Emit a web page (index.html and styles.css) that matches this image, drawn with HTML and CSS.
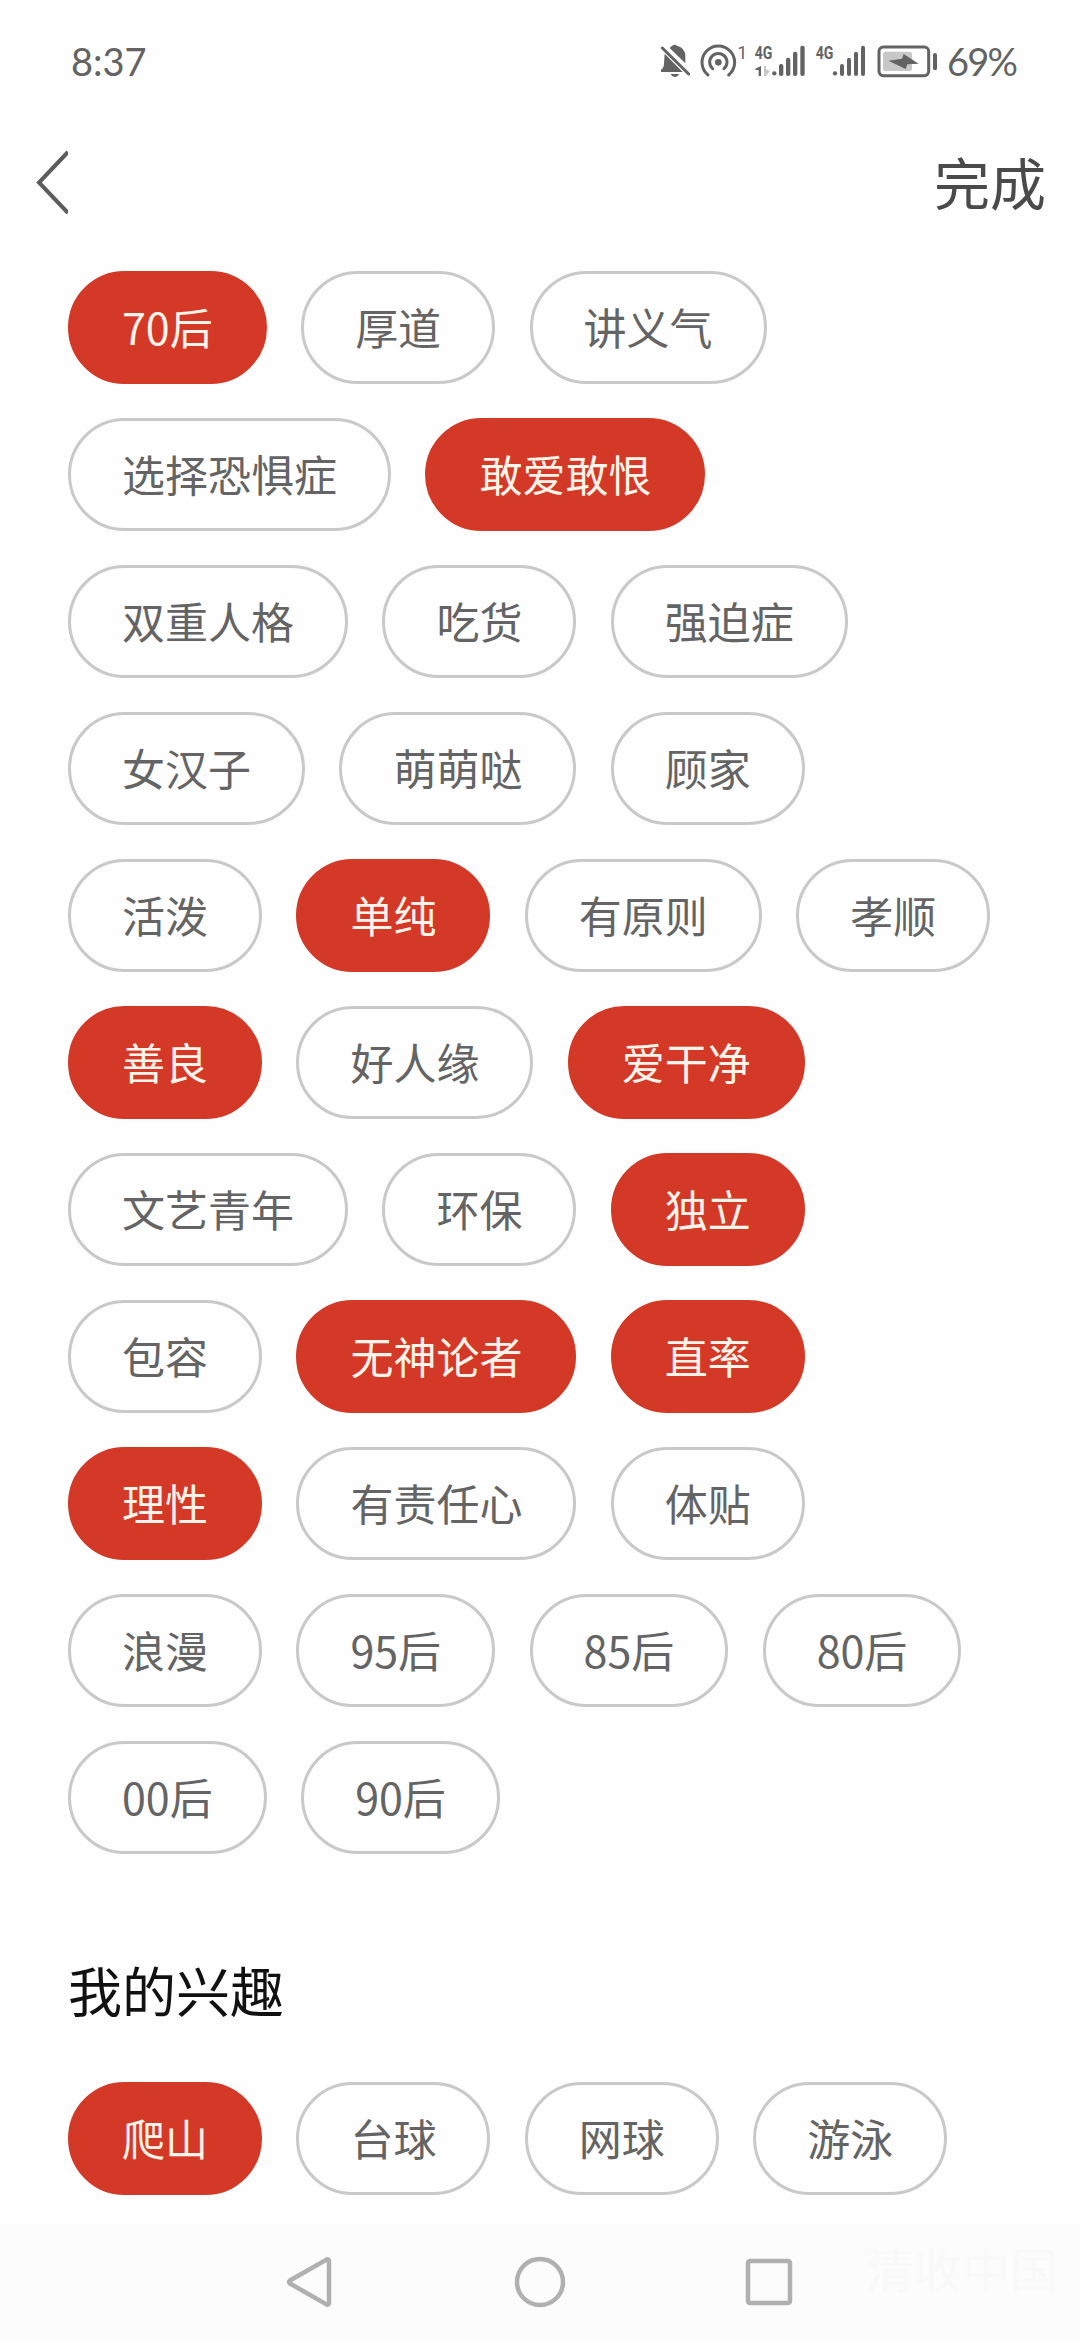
FILE: index.html
```html
<!DOCTYPE html>
<html lang="zh-CN">
<head>
    <meta charset="UTF-8">
    <meta name="viewport" content="width=device-width, initial-scale=1.0">
    <title>我的标签</title>
    <link rel="stylesheet" href="styles.css">
</head>
<body>
    <div class="status-bar">
        <span class="time">8:37</span>
        <div class="status-icons">
            <svg class="icon-bell" viewBox="0 0 96 108">
                <path d="M29 15 Q34 9 37 8 Q44 2 51 8 Q76 14 76 40 V61 Z"/>
                <path d="M14 32 L68 87 H3 V80 Q12 74 12 62 Z"/>
                <path d="M32 93 H57 Q53 102 44 102 Q36 102 32 93 Z"/>
                <path class="line" d="M7 15 L86 93"/>
            </svg>
            <svg class="icon-hotspot" viewBox="0 0 141 108">
                <circle cx="55" cy="58" r="10"/>
                <path class="line" d="M38 77 A26 26 0 1 1 72 77"/>
                <path class="line" d="M24 96 A49 49 0 1 1 86 96"/>
                <text class="sup" x="112" y="47">1</text>
            </svg>
            <svg class="icon-signal" viewBox="0 0 156 108">
                <text class="net" x="2" y="49" textLength="53" lengthAdjust="spacingAndGlyphs">4G</text>
                <path d="M21 69 V99 H14 V81 H4 V77 Z"/>
                <path class="pale" d="M30 69 H36 V79 L48 84 L36 99 H30 Z"/>
                <circle cx="61" cy="91" r="6.5"/>
                <rect x="75" y="63" width="13" height="36" rx="6"/>
                <rect x="96" y="44" width="13" height="55" rx="6"/>
                <rect x="117" y="26" width="13" height="73" rx="6"/>
                <rect x="139" y="8" width="13" height="91" rx="6"/>
            </svg>
            <svg class="icon-signal second" viewBox="0 0 156 108">
                <text class="net" x="2" y="49" textLength="53" lengthAdjust="spacingAndGlyphs">4G</text>
                <circle cx="60" cy="91" r="6.5"/>
                <rect x="75" y="63" width="12" height="36" rx="6"/>
                <rect x="96" y="44" width="12" height="55" rx="6"/>
                <rect x="117" y="26" width="12" height="73" rx="6"/>
                <rect x="138" y="8" width="12" height="91" rx="6"/>
            </svg>
            <svg class="icon-battery" viewBox="0 0 186 108">
                <rect class="line" x="6" y="12" width="149" height="86" rx="13"/>
                <rect class="pale" x="18" y="26" width="87" height="58" rx="7"/>
                <path d="M34 53 L75 47 L80 33 L125 62 L91 64 L86 78 Z"/>
                <rect x="168" y="30" width="12" height="52" rx="6"/>
            </svg>
        </div>
        <span class="percent">69%</span>
    </div>

    <div class="header">
        <svg class="back" viewBox="0 0 34 64">
            <path d="M34 2 L5 32.500 L34 63"/>
        </svg>
        <span class="done">完成</span>
    </div>

    <div class="content">
        <div class="tags">
            <span class="tag active">70后</span>
            <span class="tag">厚道</span>
            <span class="tag">讲义气</span>
            <span class="tag">选择恐惧症</span>
            <span class="tag active">敢爱敢恨</span>
            <span class="tag">双重人格</span>
            <span class="tag">吃货</span>
            <span class="tag">强迫症</span>
            <span class="tag">女汉子</span>
            <span class="tag">萌萌哒</span>
            <span class="tag">顾家</span>
            <span class="tag">活泼</span>
            <span class="tag active">单纯</span>
            <span class="tag">有原则</span>
            <span class="tag">孝顺</span>
            <span class="tag active">善良</span>
            <span class="tag">好人缘</span>
            <span class="tag active">爱干净</span>
            <span class="tag">文艺青年</span>
            <span class="tag">环保</span>
            <span class="tag active">独立</span>
            <span class="tag">包容</span>
            <span class="tag active">无神论者</span>
            <span class="tag active">直率</span>
            <span class="tag active">理性</span>
            <span class="tag">有责任心</span>
            <span class="tag">体贴</span>
            <span class="tag">浪漫</span>
            <span class="tag">95后</span>
            <span class="tag">85后</span>
            <span class="tag">80后</span>
            <span class="tag">00后</span>
            <span class="tag">90后</span>
        </div>

        <h2>我的兴趣</h2>
        <div class="tags">
            <span class="tag active">爬山</span>
            <span class="tag">台球</span>
            <span class="tag">网球</span>
            <span class="tag">游泳</span>
        </div>
    </div>

    <div class="nav-bar">
        <svg viewBox="0 0 52 52"><path d="M44 4.500 V47.500 Q43.500 49 41.500 48.500 L5 27.500 Q3 26 5 24.500 L41.500 3.500 Q43.500 3 44 4.500 Z"/></svg>
        <svg viewBox="0 0 52 52"><circle cx="26" cy="26" r="23"/></svg>
        <svg viewBox="0 0 52 52"><rect x="5" y="5" width="42" height="42" rx="2"/></svg>
        <span class="watermark">清收中国</span>
    </div>
</body>
</html>
```
FILE: styles.css
```css
* {
    box-sizing: border-box;
}
body {
    margin: 0;
    height: 2340px;
    display: flex;
    flex-direction: column;
    background: #fefefe;
    font-family: 'Noto Sans CJK SC', sans-serif;
    overflow: hidden;
}
.status-bar {
    height: 122px;
    padding: 0 66px 0 71px;
    display: flex;
    align-items: center;
    color: #636363;
    font-family: 'Lato', sans-serif;
    font-size: 38px;
}
.time {
    flex: 1;
}
.status-icons {
    display: flex;
}
.status-icons svg {
    height: 36px;
    fill: #636363;
    overflow: visible;
}
.status-icons .line {
    fill: none;
    stroke: #636363;
    stroke-width: 9;
    stroke-linecap: round;
}
.status-icons .pale {
    fill: #c8c8c8;
}
.icon-bell {
    width: 32px;
    margin-right: 8px;
}
.icon-hotspot {
    width: 47px;
    margin-right: 7px;
}
.icon-signal {
    width: 52px;
    margin-right: 9px;
}
.icon-signal.second {
    margin-right: 10px;
}
.icon-battery {
    width: 62px;
    margin-right: 8px;
}
.net {
    font-family: 'Roboto', sans-serif;
    font-size: 55px;
    font-weight: bold;
}
.sup {
    font-family: 'Roboto', sans-serif;
    font-size: 54px;
}
.percent {
    width: 67px;
    letter-spacing: -1.8px;
    white-space: nowrap;
}
.header {
    height: 120px;
    padding: 0 34px;
    display: flex;
    align-items: center;
    justify-content: space-between;
}
.back {
    width: 34px;
    height: 64px;
    fill: none;
    stroke: #5c5c5c;
    stroke-width: 4;
}
.done {
    padding-bottom: 3px;
    color: #4a4a4a;
    font-size: 56px;
    line-height: 1;
}
.content {
    flex: 1;
    padding: 29px 68px 0;
}
.tags {
    display: flex;
    flex-wrap: wrap;
    gap: 34px 34.400px;
}
.tag {
    height: 113px;
    padding: 0 51px;
    border: 3px solid #c9c9c9;
    border-radius: 57px;
    color: #646464;
    font-size: 43px;
    line-height: 105px;
    white-space: nowrap;
}
.tag.active {
    background: #d33926;
    border-color: #d33926;
    color: #fff3ea;
}
h2 {
    margin: 96px 0 52px;
    color: #111;
    font-size: 54px;
    font-weight: normal;
    line-height: 80px;
}
.nav-bar {
    position: relative;
    height: 116px;
    display: flex;
    align-items: center;
    justify-content: center;
    gap: 177px;
    background: #fcfcfc;
}
.nav-bar svg {
    width: 52px;
    height: 52px;
    fill: none;
    stroke: #b0b0b0;
    stroke-width: 4.500;
}
.watermark {
    position: absolute;
    right: 22px;
    top: 11px;
    color: #f9f9f9;
    font-size: 48px;
    line-height: 64px;
}
```
